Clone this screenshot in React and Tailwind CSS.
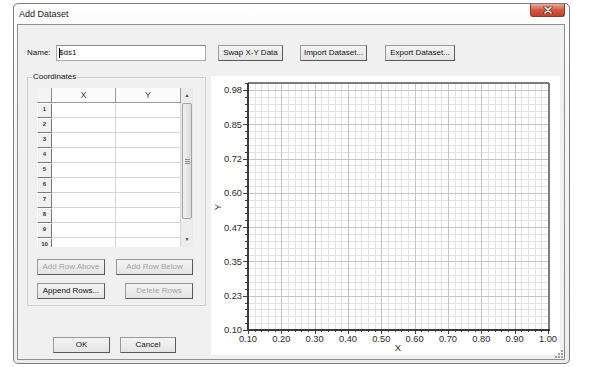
import React from "react";

function Btn({ className = "", disabled, children }) {
  return (
    <div
      className={
        "h-[16px] shrink-0 flex items-center justify-center text-[8px] leading-none border border-[#9a9a9a] border-r-[#5a5a5a] border-b-[#5a5a5a] bg-linear-to-b from-[#f4f4f4] to-[#e4e4e4] " +
        (disabled ? "text-[#a3a3a3] " : "text-[#111] ") +
        className
      }
    >
      {children}
    </div>
  );
}

function CloseBtn() {
  return (
    <div className="w-[35px] h-[13px] rounded-b-[3px] border border-[#8a3a2c] border-t-0 bg-linear-to-b from-[#e7a89a] via-[#cf5a44] to-[#c2412b] flex items-center justify-center">
      <svg width="10" height="8" viewBox="0 0 10 8">
        <path d="M2 1 L8 7 M8 1 L2 7" stroke="#5a2016" strokeWidth="3" strokeLinecap="round" />
        <path d="M2 1 L8 7 M8 1 L2 7" stroke="#ffffff" strokeWidth="1.6" strokeLinecap="round" />
      </svg>
    </div>
  );
}

function Grid() {
  const rows = [1, 2, 3, 4, 5, 6, 7, 8, 9, 10];
  return (
    <div className="flex h-[159px] w-[156px]">
      <div className="w-[144px] h-[159px] overflow-hidden flex flex-col bg-white">
        <div className="flex h-[15px] shrink-0">
          <div className="w-[15px] h-[15px] bg-[#f3f3f3] border-r border-b border-[#8c8c8c]" />
          <div className="w-[64px] h-[15px] bg-[#fbfbfb] border-r border-b border-[#9a9a9a] flex items-center justify-center text-[9px] leading-none text-[#444]">
            X
          </div>
          <div className="w-[65px] h-[15px] bg-[#fbfbfb] border-r border-b border-[#9a9a9a] flex items-center justify-center text-[9px] leading-none text-[#444]">
            Y
          </div>
        </div>
        {rows.map((r) => (
          <div key={r} className="flex h-[15px] shrink-0">
            <div className="w-[15px] h-[15px] bg-[#f0f0f0] border-l border-t border-white border-r-[#7a7a7a] border-b-[#7a7a7a] border-r border-b flex items-start justify-center pt-[2px] text-[6px] font-bold leading-[6px] text-[#333]">
              {r}
            </div>
            <div className="w-[64px] h-[15px] border-r border-b border-[#d6d6d6]" />
            <div className="w-[65px] h-[15px] border-r border-b border-[#d6d6d6]" />
          </div>
        ))}
      </div>
      <div className="w-[12px] h-[159px] bg-[#ececec] flex flex-col">
        <div className="h-[15px] flex items-center justify-center text-[5px] leading-none text-[#444]">▲</div>
        <div className="h-[116px] mx-[1px] rounded-[2px] border border-[#a2a2a2] bg-linear-to-r from-[#f0f0f0] to-[#dcdcdc] flex items-center justify-center">
          <div className="flex flex-col gap-[1px]">
            <div className="w-[5px] h-px bg-[#8a8a8a]" />
            <div className="w-[5px] h-px bg-[#8a8a8a]" />
            <div className="w-[5px] h-px bg-[#8a8a8a]" />
          </div>
        </div>
        <div className="flex-1" />
        <div className="h-[15px] flex items-center justify-center text-[5px] leading-none text-[#444]">▼</div>
      </div>
    </div>
  );
}

function Chart() {
  const L = 37, T = 7, R = 337, B = 254;
  const xs = [];
  for (let i = 0; i <= 45; i++) xs.push({ x: L + (i * 300) / 45, major: i % 5 === 0, i });
  const ys = [];
  for (let j = 0; j <= 36; j++) ys.push({ y: B - (j * 240) / 35, major: j % 5 === 0 && j <= 35, j });
  const xl = ["0.10", "0.20", "0.30", "0.40", "0.50", "0.60", "0.70", "0.80", "0.90", "1.00"];
  const yl = ["0.10", "0.23", "0.35", "0.47", "0.60", "0.72", "0.85", "0.98"];
  const px = (v) => Math.round(v) + 0.5;
  return (
    <svg width="349" height="279" viewBox="0 0 349 279" className="block">
      <rect x="0" y="0" width="349" height="279" fill="#ffffff" />
      {xs.filter((d) => !d.major).map((d) => (
        <line key={"mx" + d.i} x1={px(d.x)} x2={px(d.x)} y1={T} y2={B} stroke="#e2e2e2" strokeWidth="1" shapeRendering="crispEdges" />
      ))}
      {ys.filter((d) => !d.major).map((d) => (
        <line key={"my" + d.j} y1={px(d.y)} y2={px(d.y)} x1={L} x2={R} stroke="#e2e2e2" strokeWidth="1" shapeRendering="crispEdges" />
      ))}
      {xs.filter((d) => d.major).map((d) => (
        <line key={"Mx" + d.i} x1={px(d.x)} x2={px(d.x)} y1={T} y2={B} stroke="#c4c4c4" strokeWidth="1" shapeRendering="crispEdges" />
      ))}
      {ys.filter((d) => d.major).map((d) => (
        <line key={"My" + d.j} y1={px(d.y)} y2={px(d.y)} x1={L} x2={R} stroke="#c4c4c4" strokeWidth="1" shapeRendering="crispEdges" />
      ))}
      <line x1={L} x2={R + 1} y1={T} y2={T} stroke="#7c7c7c" strokeWidth="2" shapeRendering="crispEdges" />
      <line x1={R + 1} x2={R + 1} y1={T} y2={B} stroke="#7c7c7c" strokeWidth="2" shapeRendering="crispEdges" />
      {ys.map((d) => (
        <line key={"ty" + d.j} x1={d.major ? L - 5 : L - 3} x2={L} y1={px(d.y)} y2={px(d.y)} stroke="#404040" strokeWidth="1" shapeRendering="crispEdges" />
      ))}
      {xs.map((d) => (
        <line key={"tx" + d.i} x1={px(d.x)} x2={px(d.x)} y1={B} y2={d.major ? B + 4 : B + 2} stroke="#404040" strokeWidth="1" shapeRendering="crispEdges" />
      ))}
      <line x1={L} x2={L} y1={T} y2={B + 1} stroke="#3a3a3a" strokeWidth="2" shapeRendering="crispEdges" />
      <line x1={L} x2={R + 2} y1={B} y2={B} stroke="#3a3a3a" strokeWidth="2" shapeRendering="crispEdges" />
      {yl.map((t, k) => (
        <text key={"yl" + k} x={31} y={B - (k * 240) / 7 + 3.4} fontSize="9.3" textAnchor="end" fill="#2a2a2a">
          {t}
        </text>
      ))}
      {xl.map((t, k) => (
        <text key={"xl" + k} x={L + (k * 300) / 9} y={266} fontSize="9.3" textAnchor="middle" fill="#2a2a2a">
          {t}
        </text>
      ))}
      <text x={187} y={274.5} fontSize="9.5" textAnchor="middle" fill="#2a2a2a">
        X
      </text>
      <text x={6} y={134.5} fontSize="9.5" textAnchor="middle" fill="#2a2a2a" transform="rotate(-90 6 131)">
        Y
      </text>
    </svg>
  );
}

export default function App() {
  return (
    <div className="w-[600px] h-[367px] bg-white font-['Liberation_Sans',Arial,sans-serif] pl-[13px] pt-[3px] overflow-hidden">
      <div className="w-[557px] h-[361px] border border-[#7d7d7d] rounded-[5px] bg-linear-to-b from-[#fdfdfd] via-[#f3f3f3] to-[#ececec] flex flex-col pl-[3px] pr-[4px] pb-[3px]">
        <div className="h-[20px] shrink-0 flex items-start justify-between">
          <div className="pl-[2px] pt-[5px] text-[9px] leading-[11px] text-[#1b1b1b]">Add Dataset</div>
          <CloseBtn />
        </div>
        <div className="relative w-[548px] h-[336px] border border-[#8e8e8e] bg-[#f0f0f0] flex flex-col">
          <div className="flex items-center h-[16px] mt-[20px] pl-[9px]">
            <span className="w-[29px] text-[8px] leading-none text-[#111]">Name:</span>
            <div className="w-[150px] h-[16px] border border-[#a8a8a8] border-t-[#8a8a8a] bg-white flex items-center pl-[2px] text-[8px] leading-none text-[#111]">
              <span className="w-px h-[10px] bg-black" />
              <span className="ml-[-1px]">$ds1</span>
            </div>
            <Btn className="ml-[12px] w-[65px]">Swap X-Y Data</Btn>
            <Btn className="ml-[17px] w-[67px]">Import Dataset...</Btn>
            <Btn className="ml-[18px] w-[70px]">Export Dataset...</Btn>
          </div>
          <div className="flex items-start mt-[11px] pl-[9px]">
            <div className="w-[179px] shrink-0 flex flex-col">
              <div className="relative mt-[5px] h-[229px] border border-[#cfcfcf] pt-[10px] pl-[9px] flex flex-col">
                <span className="absolute left-[4px] top-[-6px] bg-[#f0f0f0] px-[1px] text-[8px] leading-[10px] text-[#111]">
                  Coordinates
                </span>
                <Grid />
                <div className="flex mt-[12px]">
                  <Btn disabled className="w-[68px]">Add Row Above</Btn>
                  <Btn disabled className="ml-[11px] w-[77px]">Add Row Below</Btn>
                </div>
                <div className="flex mt-[8px]">
                  <Btn className="w-[68px]">Append Rows...</Btn>
                  <Btn disabled className="ml-[20px] w-[68px]">Delete Rows</Btn>
                </div>
              </div>
              <div className="flex mt-[31px] pl-[26px]">
                <Btn className="w-[57px]">OK</Btn>
                <Btn className="ml-[10px] w-[56px]">Cancel</Btn>
              </div>
            </div>
            <div className="ml-[5px] mt-[4px] w-[349px] h-[279px] bg-white shrink-0">
              <Chart />
            </div>
          </div>
          <div className="absolute right-0 bottom-0">
            <svg width="10" height="10" viewBox="0 0 10 10" className="block">
              <g fill="#a0a0a0">
                <rect x="7" y="1" width="2" height="2" />
                <rect x="4" y="4" width="2" height="2" />
                <rect x="7" y="4" width="2" height="2" />
                <rect x="1" y="7" width="2" height="2" />
                <rect x="4" y="7" width="2" height="2" />
                <rect x="7" y="7" width="2" height="2" />
              </g>
            </svg>
          </div>
        </div>
      </div>
    </div>
  );
}
